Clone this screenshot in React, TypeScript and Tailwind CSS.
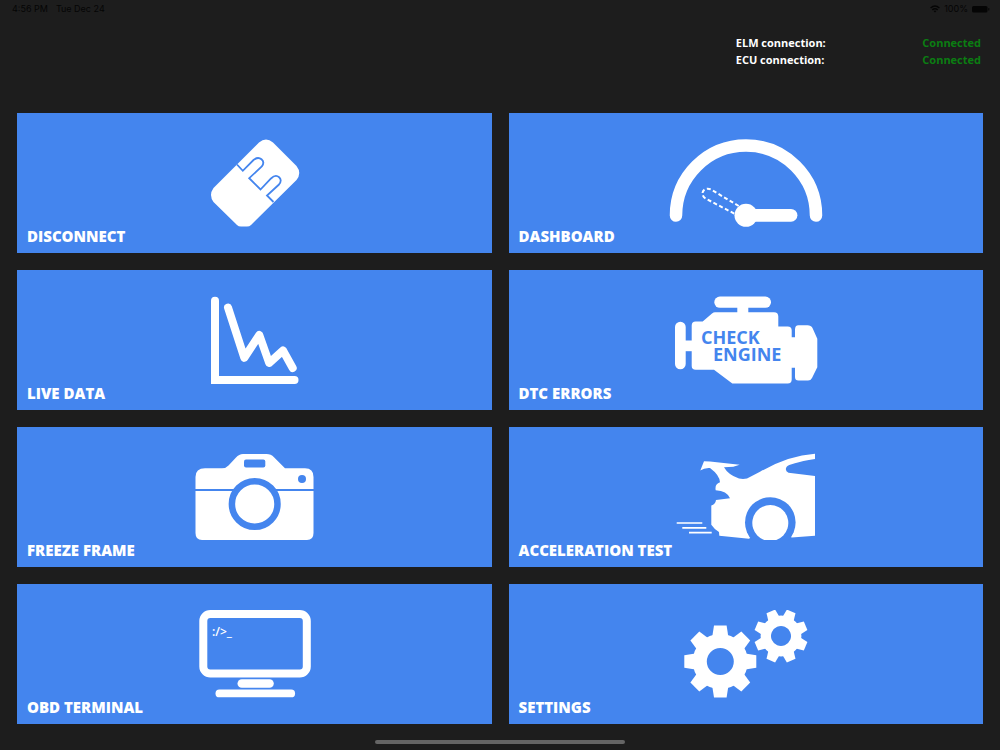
import React from 'react';

const DisconnectIcon: React.FC = () => (
  <svg width="90" height="88" viewBox="-2 0 90 88" fill="none" overflow="visible" aria-hidden="true">
    <path
      d="M48 3.500Q55-2.500 62 3.500L85.500 27Q91 34 85.500 41L40 86Q38.500 87.500 36 87.500H30Q27.500 87.500 26 86L2.500 63Q-2.500 56 2.500 49Z"
      fill="#fff"
    />
    <path
      d="M26 25.500L31.800 31.800L42.500 21C48.500 16 55 22 50.800 27.500L38.200 39.200L49.500 50.500L60 39.500C66 33.500 73 40 68 45.500L56 56.500L62.500 63"
      stroke="#4485ee"
      strokeWidth="1.800"
    />
  </svg>
);

const DashboardIcon: React.FC = () => (
  <svg width="154" height="88" viewBox="0 0 154 88" fill="none" stroke="#fff" aria-hidden="true">
    <path d="M7 76.500A70 70 0 0 1 147 76.500" strokeWidth="12.500" strokeLinecap="round" />
    <circle cx="77" cy="76.300" r="11.500" fill="#fff" stroke="none" />
    <path d="M77 76.300H122" strokeWidth="12.800" strokeLinecap="round" />
    <path
      d="M69.700 67L42 50.500C35 47 30 55 36.500 59.500L66 75"
      strokeWidth="2"
      strokeDasharray="4 2.5"
    />
  </svg>
);

const LiveDataIcon: React.FC = () => (
  <svg width="90" height="88" viewBox="-2 0 90 88" fill="none" stroke="#fff" strokeWidth="8" strokeLinecap="round" aria-hidden="true">
    <path d="M4 4.800V84H83.500" />
    <path d="M17 11.500L33.300 61.800L48.300 39L58.200 67L72 54.500L81.700 72" strokeLinejoin="round" />
  </svg>
);

const EngineIcon: React.FC = () => (
  <svg width="144" height="88" viewBox="0 0 144 88" fill="#fff" aria-hidden="true">
    <rect x="1" y="25.800" width="10.700" height="47.400" rx="5.300" />
    <rect x="10" y="44.500" width="9" height="10.700" />
    <rect x="40.300" y="0.500" width="56.700" height="11.300" rx="5.600" />
    <rect x="63.300" y="11" width="11" height="6" />
    <path d="M17.700 29.500Q17.700 25.500 21.700 25.500H28.700L38 17.500Q39.500 16.200 41 16.200H100Q104.300 16.200 104.300 20.500V30.500H113.700Q117.700 30.500 117.700 34.500V41.200H121V33.500Q121 29.200 124.500 29.200H133.500Q137 29.200 138.500 32L143.300 42.800V71.200L138 82Q136.800 84.500 134 84.500H124.500Q121 84.500 121 81V71.800H117.700V83.500Q117.700 87.500 113.700 87.500H58.300L40 73.800H21.700Q17.700 73.800 17.700 70Z" />
    <text fill="#4485ee" fontFamily="'Open Sans', 'Noto Sans', sans-serif" fontSize="18" fontWeight="700">
      <tspan x="27" y="48">CHECK</tspan>
      <tspan x="39" y="65">ENGINE</tspan>
    </text>
  </svg>
);

const CameraIcon: React.FC = () => (
  <svg width="122" height="88" viewBox="-2 0 122 88" fill="#fff" aria-hidden="true">
    <path d="M.500 24Q.500 15.300 10 15.300H27Q31 15.300 33.500 12.500L41 4.500Q44 1 48 1H71.500Q76 1 79 4.300L90 15.300H110Q118.500 15.300 118.500 24V80Q118.500 87 112 87H7Q.500 87 .500 80Z" />
    <rect x="49" y="6.500" width="21.300" height="8" rx="2" fill="#4485ee" />
    <path d="M0 37H119" stroke="#4485ee" strokeWidth="2" />
    <circle cx="59.700" cy="51" r="22.800" stroke="#4485ee" strokeWidth="6.500" />
    <circle cx="107" cy="26" r="4" fill="#4485ee" />
  </svg>
);

const CarIcon: React.FC = () => (
  <svg width="140" height="88" viewBox="0 0 140 88" fill="#fff" aria-hidden="true">
    <path d="M24.300 17.500L28 8.200L34 8.500L63.700 11.800L57.300 13.800L48 14.200Q52 21.500 63 25.600Q67 26.300 71 25.600L84 18.800Q112 2.500 139 .700V6Q113 10.300 110.500 14Q108.500 17.800 112.500 19.800L139 23V82.700L115.700 84.400L94 70L73 85.700L43.300 82.700L43 79Q39 77 35.300 71.700V52.500Q39.500 51.200 40 47L54 45.300Q51 38 39.700 37.300Q38.500 31 44 29.300Q43.500 22 34 15Q28.500 14.500 24.300 17.500Z" />
    <circle cx="94.300" cy="69.500" r="25.300" fill="#4485ee" />
    <path d="M88.300 87A18 18 0 1 1 100.300 87Z" />
    <path d="M.700 70H26.300M6.300 74.800H30.300M13 79.700H35.700" stroke="#fff" strokeWidth="1.700" />
  </svg>
);

const TerminalIcon: React.FC = () => (
  <svg width="114" height="88" viewBox="-2 0 114 88" fill="#fff" aria-hidden="true">
    <rect x="4.300" y="4" width="103.500" height="59.500" rx="7" fill="none" stroke="#fff" strokeWidth="8" />
    <rect x="38.500" y="69.200" width="36.300" height="8.600" rx="4.300" />
    <rect x="16.500" y="79.500" width="79.600" height="7.800" rx="3.900" />
    <text x="13" y="26" fontFamily="'Open Sans', 'Noto Sans', sans-serif" fontSize="12" fontWeight="600">
      :/&gt;_
    </text>
  </svg>
);

const TEETH = [0, 45, 90, 135, 180, 225, 270, 315];

const Gear: React.FC<{ transform: string }> = ({ transform }) => (
  <g transform={transform}>
    <circle r="20.500" fill="none" stroke="#fff" strokeWidth="14" />
    {TEETH.map((angle) => (
      <path key={angle} d="M-8-25L-6.300-36H6.300L8-25Z" transform={`rotate(${angle})`} />
    ))}
  </g>
);

const SettingsIcon: React.FC = () => (
  <svg width="124" height="88" viewBox="0 0 124 88" fill="#fff" aria-hidden="true">
    <Gear transform="translate(36.300 51.500)" />
    <Gear transform="translate(97 26) rotate(22.500) scale(.740)" />
  </svg>
);

const tiles: { label: string; Icon: React.FC }[] = [
  { label: 'DISCONNECT', Icon: DisconnectIcon },
  { label: 'DASHBOARD', Icon: DashboardIcon },
  { label: 'LIVE DATA', Icon: LiveDataIcon },
  { label: 'DTC ERRORS', Icon: EngineIcon },
  { label: 'FREEZE FRAME', Icon: CameraIcon },
  { label: 'ACCELERATION TEST', Icon: CarIcon },
  { label: 'OBD TERMINAL', Icon: TerminalIcon },
  { label: 'SETTINGS', Icon: SettingsIcon },
];

const connections = [
  { name: 'ELM connection:', status: 'Connected' },
  { name: 'ECU connection:', status: 'Connected' },
];

const StatusBar: React.FC = () => (
  <div className="flex items-center justify-between pl-3 pr-2.5 pt-1 h-[14px] font-['Inter',sans-serif] text-[9px] leading-[10px] text-[#050505]">
    <div className="flex gap-2">
      <span>4:56 PM</span>
      <span>Tue Dec 24</span>
    </div>
    <div className="flex items-center gap-1">
      <svg width="10" height="8" viewBox="0 0 10 8" fill="none" stroke="#050505" strokeWidth="1.400" aria-hidden="true">
        <path d="M.600 3Q5-.800 9.400 3M2.300 4.900Q5 2.600 7.700 4.900" />
        <path d="M3.600 6L5 7.600L6.400 6Q5 5 3.600 6Z" fill="#050505" stroke="none" />
      </svg>
      <span>100%</span>
      <svg width="18" height="8" viewBox="0 0 18 8" fill="#050505" aria-hidden="true">
        <rect x="0" y="1" width="15.500" height="6.500" rx="1.600" />
        <rect x="16.300" y="3" width="1" height="2.500" rx=".500" />
      </svg>
    </div>
  </div>
);

const App: React.FC = () => {
  return (
    <div className="min-h-screen flex flex-col bg-[#1d1d1d] font-['Open_Sans','Noto_Sans',sans-serif]">
      <StatusBar />

      <header className="flex justify-end pt-5 pr-[19px] pb-[45px]">
        <dl className="w-1/4 min-w-[244px] text-[11px] leading-[17px] font-bold">
          {connections.map(({ name, status }) => (
            <div key={name} className="flex justify-between">
              <dt className="text-white">{name}</dt>
              <dd className="text-[#0b7d12]">{status}</dd>
            </div>
          ))}
        </dl>
      </header>

      <main className="grow grid grid-cols-2 gap-[17px] px-[17px]">
        {tiles.map(({ label, Icon }) => (
          <button
            key={label}
            type="button"
            className="flex flex-col items-center bg-[#4485ee] hover:bg-[#5590f0] pt-[26px] pb-2 cursor-pointer"
          >
            <Icon />
            <span className="self-start pl-[10px] text-[15px] leading-[18px] font-extrabold text-white">{label}</span>
          </button>
        ))}
      </main>

      <footer className="flex justify-center pt-4 pb-[6px]">
        <div className="w-1/4 h-1 rounded-full bg-[#656565]" />
      </footer>
    </div>
  );
};

export default App;
